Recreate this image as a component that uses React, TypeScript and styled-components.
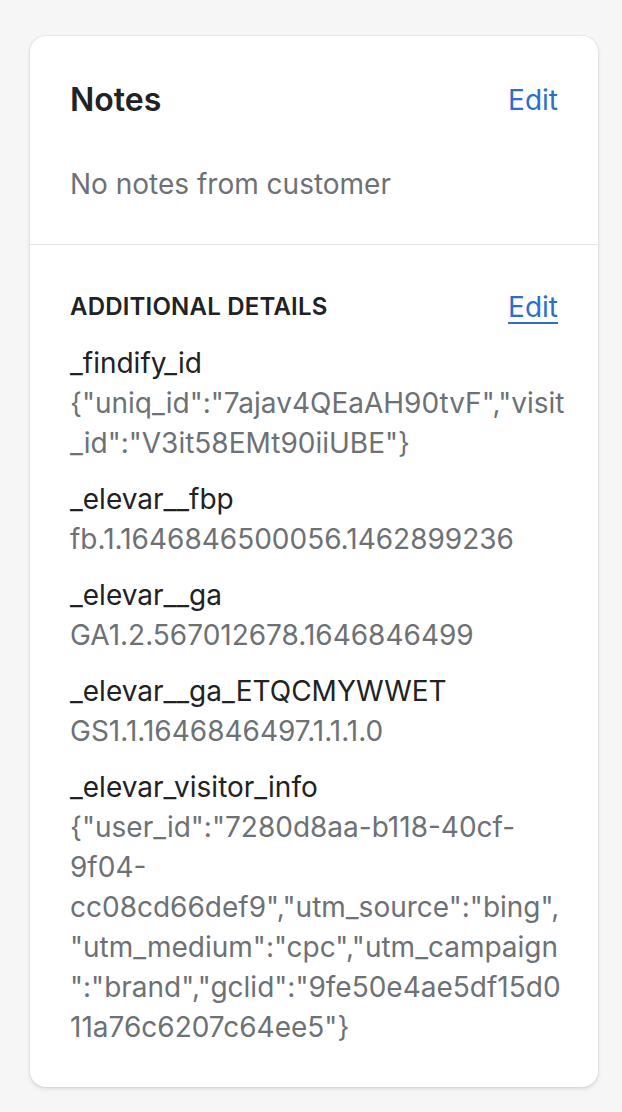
import styled, { createGlobalStyle } from 'styled-components'

const GlobalStyle = createGlobalStyle`
    html, body {
        margin: 0;
        padding: 0;
        background: #f6f6f7;
    }
    body {
        font-family: Inter, "Noto Sans", "Liberation Sans", sans-serif;
        -webkit-font-smoothing: antialiased;
    }
`

const Page = styled.div({
    padding: '36px 24px 26px 30px',
})

const Card = styled.div({
    background: '#ffffff',
    borderRadius: '16px',
    boxShadow: '0 0 0 1px rgba(63, 63, 68, 0.05), 0 2px 4px rgba(63, 63, 68, 0.15)',
    overflow: 'hidden',
})

const Section = styled.section({
    padding: '40px',
    '& + &': {
        borderTop: '1px solid #e1e3e5',
    },
})

const HeaderRow = styled.div<{ $height: number }>(({ $height }) => ({
    display: 'flex',
    alignItems: 'center',
    justifyContent: 'space-between',
    height: `${$height}px`,
}))

const Heading = styled.h2({
    margin: 0,
    fontSize: '32px',
    lineHeight: '48px',
    fontWeight: 600,
    color: '#202223',
})

const Subheading = styled.h3({
    margin: 0,
    fontSize: '24px',
    lineHeight: '32px',
    fontWeight: 600,
    textTransform: 'uppercase',
    letterSpacing: '0.2px',
    color: '#202223',
})

const EditLink = styled.a<{ $underline?: boolean }>(({ $underline }) => ({
    fontSize: '28px',
    lineHeight: '40px',
    color: '#2c6ecb',
    textDecoration: $underline ? 'underline' : 'none',
    textUnderlineOffset: '5px',
    textDecorationThickness: '2px',
    cursor: 'pointer',
}))

const Muted = styled.p({
    margin: '40px 0 0',
    fontSize: '28px',
    lineHeight: '40px',
    color: '#6d7175',
})

const DetailList = styled.dl({
    margin: '14px 0 0',
    display: 'flex',
    flexDirection: 'column',
    gap: '16px',
})

const Detail = styled.div({
    display: 'flex',
    flexDirection: 'column',
})

const Key = styled.dt({
    fontSize: '28px',
    lineHeight: '40px',
    color: '#202223',
})

const Value = styled.dd({
    margin: 0,
    fontSize: '28px',
    lineHeight: '40px',
    color: '#6d7175',
})

const ValueLine = styled.span({
    display: 'block',
    whiteSpace: 'nowrap',
})

// lines split where the original wraps them
const details = [
    {
        key: '_findify_id',
        lines: ['{"uniq_id":"7ajav4QEaAH90tvF","visit', '_id":"V3it58EMt90iiUBE"}'],
    },
    { key: '_elevar__fbp', lines: ['fb.1.1646846500056.1462899236'] },
    { key: '_elevar__ga', lines: ['GA1.2.567012678.1646846499'] },
    { key: '_elevar__ga_ETQCMYWWET', lines: ['GS1.1.1646846497.1.1.1.0'] },
    {
        key: '_elevar_visitor_info',
        lines: [
            '{"user_id":"7280d8aa-b118-40cf-',
            '9f04-',
            'cc08cd66def9","utm_source":"bing",',
            '"utm_medium":"cpc","utm_campaign',
            '":"brand","gclid":"9fe50e4ae5df15d0',
            '11a76c6207c64ee5"}',
        ],
    },
]

const App = () => {
    return (
        <>
            <GlobalStyle />
            <Page>
                <Card>
                    <Section>
                        <HeaderRow $height={48}>
                            <Heading>Notes</Heading>
                            <EditLink>Edit</EditLink>
                        </HeaderRow>
                        <Muted>No notes from customer</Muted>
                    </Section>
                    <Section>
                        <HeaderRow $height={44}>
                            <Subheading>Additional details</Subheading>
                            <EditLink $underline>Edit</EditLink>
                        </HeaderRow>
                        <DetailList>
                            {details.map((d) => (
                                <Detail key={d.key}>
                                    <Key>{d.key}</Key>
                                    <Value>
                                        {d.lines.map((line, i) => (
                                            <ValueLine key={i}>{line}</ValueLine>
                                        ))}
                                    </Value>
                                </Detail>
                            ))}
                        </DetailList>
                    </Section>
                </Card>
            </Page>
        </>
    )
}

export default App
